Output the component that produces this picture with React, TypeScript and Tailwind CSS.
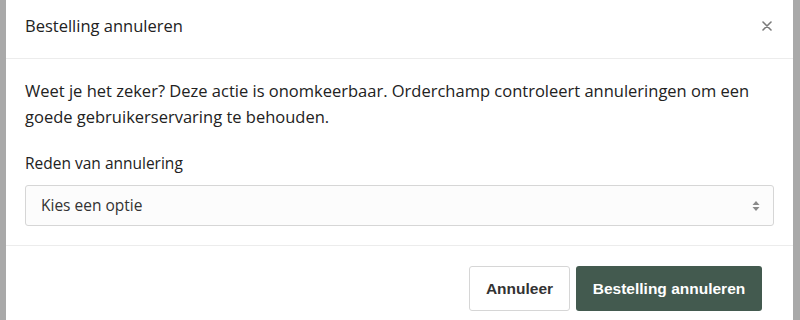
import React from "react";

export default function App() {
  return (
    <div className="flex h-[320px] w-[800px] overflow-hidden bg-[#a9a9a9]" style={{ fontFamily: "'Open Sans', sans-serif" }}>
      <div className="ml-[6px] flex h-[320px] w-[787px] flex-col bg-white">
        <div className="flex shrink-0 items-center justify-between border-b border-[#ececec] pb-[21px] pl-[19px] pr-[21px] pt-[15px]">
          <span className="text-[16.5px] font-medium leading-[22px] text-[#222]">Bestelling annuleren</span>
          <svg width="10" height="10" viewBox="0 0 10 10" className="text-[#7a7a7a]">
            <path d="M1 1L9 9M9 1L1 9" stroke="currentColor" strokeWidth="1.6" strokeLinecap="round" />
          </svg>
        </div>
        <div className="flex flex-col border-b border-[#ececec] px-[19px] pb-[19px] pt-[19px]">
          <p className="text-[16.5px] leading-[26px] text-[#222]">
            Weet je het zeker? Deze actie is onomkeerbaar. Orderchamp controleert annuleringen om een goede gebruikerservaring te behouden.
          </p>
          <label className="mt-[23px] text-[15.5px] leading-[20px] text-[#222]">Reden van annulering</label>
          <div className="mt-[12px] flex h-[41px] items-center justify-between rounded-[3px] border border-[#d6d6d6] bg-[#fcfcfc] pl-[15px] pr-[13px]">
            <span className="text-[15.5px] text-[#333]">Kies een optie</span>
            <svg width="8" height="12" viewBox="0 0 8 12" className="text-[#8a8a8a]">
              <path d="M4 1L7.5 5H0.5Z" fill="currentColor" />
              <path d="M4 11L7.5 7H0.5Z" fill="currentColor" />
            </svg>
          </div>
        </div>
        <div className="flex justify-end gap-[6px] pr-[31px] pt-[20px]">
          <button className="h-[45px] w-[101px] rounded-[3px] border border-[#d6d6d6] bg-white text-[15.5px] font-bold text-[#333]" style={{ fontFamily: "'Liberation Sans', Arial, sans-serif" }}>
            Annuleer
          </button>
          <button className="h-[45px] w-[186px] rounded-[3px] bg-[#435a4f] text-[15.5px] font-bold text-white" style={{ fontFamily: "'Liberation Sans', Arial, sans-serif" }}>
            Bestelling annuleren
          </button>
        </div>
      </div>
    </div>
  );
}
